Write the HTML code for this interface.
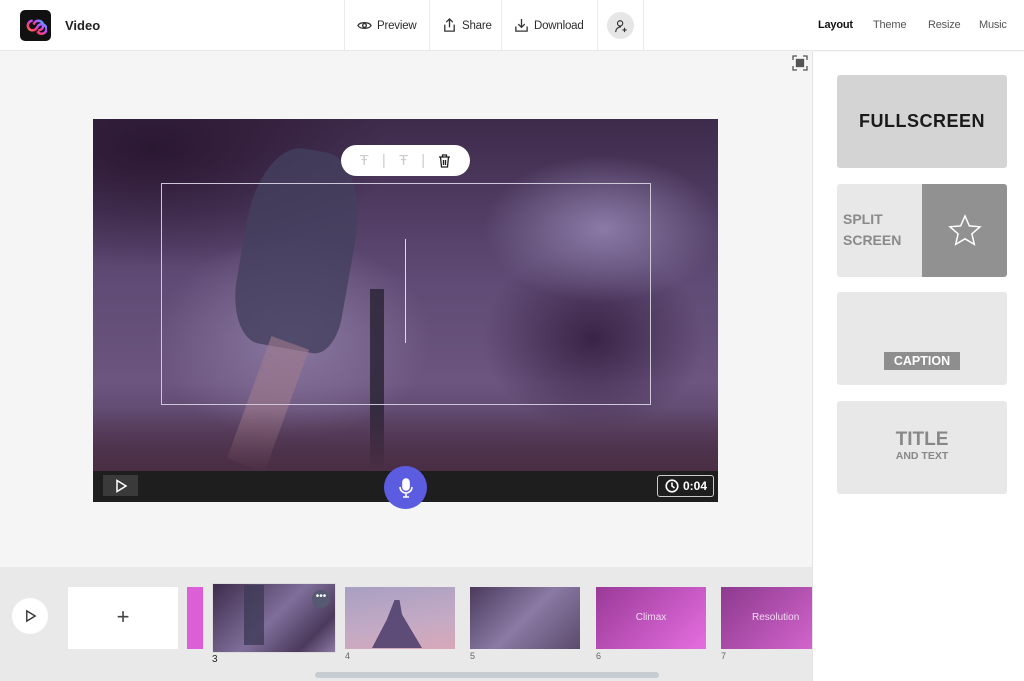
<!DOCTYPE html>
<html><head><style>
*{margin:0;padding:0;box-sizing:border-box}
body{width:1024px;height:681px;overflow:hidden;font-family:"Liberation Sans",sans-serif;background:#f5f5f5;position:relative}
.a{position:absolute}
.hdr{left:0;top:0;width:1024px;height:51px;background:#fff;border-bottom:1px solid #e6e6e6}
.nb{top:0;height:51px;border-left:1px solid #eaeaea;display:flex;align-items:center;font-size:11.5px;letter-spacing:-0.2px;color:#2c2c2c;gap:5px;padding-left:12px;white-space:nowrap}
.tab{top:19px;font-size:11px;color:#555;letter-spacing:-0.2px}
.card{left:837px;width:170px;height:93px;background:#e8e8e8;border-radius:3px}
.th{height:62px;top:587px}
.lbl{top:651px;font-size:9px;color:#666}
</style></head><body>
<div class="a hdr"></div>
<div class="a" style="left:20px;top:10px;width:31px;height:31px;background:#111;border-radius:5px"></div>
<svg class="a" style="left:24px;top:14px" width="23" height="23" viewBox="0 0 24 24"><defs><linearGradient id="g" x1="0" x2="1" y1="1" y2="0"><stop offset="0" stop-color="#f5c33b"/><stop offset=".3" stop-color="#ff3b6b"/><stop offset=".6" stop-color="#c24bff"/><stop offset="1" stop-color="#2fb8ff"/></linearGradient></defs><path d="M9 7a5 5 0 1 0 4 8l2-3a5 5 0 1 1 -1 6" fill="none" stroke="url(#g)" stroke-width="2.6"/><path d="M15 17a5 5 0 1 0-4-8l-1 2" fill="none" stroke="url(#g)" stroke-width="2.6"/></svg>
<div class="a" style="left:65px;top:18px;font-size:13px;font-weight:bold;color:#222">Video</div>
<div class="a nb" style="left:344px;width:85px"><svg width="15" height="15" viewBox="0 0 16 16" fill="none" stroke="#333" stroke-width="1.4"><path d="M1 8c2-4 12-4 14 0c-2 4-12 4-14 0z"/><circle cx="8" cy="8" r="2"/></svg>Preview</div>
<div class="a nb" style="left:429px;width:72px"><svg width="15" height="15" viewBox="0 0 16 16" fill="none" stroke="#333" stroke-width="1.4"><path d="M8 10V1M4.5 4.5L8 1l3.5 3.5M3 7v7h10V7"/></svg>Share</div>
<div class="a nb" style="left:501px;width:96px"><svg width="15" height="15" viewBox="0 0 16 16" fill="none" stroke="#333" stroke-width="1.4"><path d="M8 1v9M4.5 6.5L8 10l3.5-3.5M2 9v5h12V9"/></svg>Download</div>
<div class="a nb" style="left:597px;width:47px;border-right:1px solid #eaeaea;padding-left:0;justify-content:center"><div style="width:27px;height:27px;border-radius:50%;background:#e6e6e6;display:flex;align-items:center;justify-content:center"><svg width="14" height="14" viewBox="0 0 16 16" fill="none" stroke="#333" stroke-width="1.3"><circle cx="7" cy="5" r="3"/><path d="M2 15c0-4 3-6 6-6M12 10v5M9.5 12.5h5"/></svg></div></div>
<div class="a tab" style="left:818px;color:#111;font-weight:bold">Layout</div>
<div class="a tab" style="left:873px">Theme</div>
<div class="a tab" style="left:928px">Resize</div>
<div class="a tab" style="left:979px">Music</div>
<!-- right panel -->
<div class="a" style="left:812px;top:52px;width:212px;height:629px;background:#fff;border-left:1px solid #e3e3e3"></div>
<div class="a card" style="top:75px;background:#d4d4d4;display:flex;align-items:center;justify-content:center;font-size:18px;font-weight:bold;letter-spacing:0.5px;color:#1a1a1a">FULLSCREEN</div>
<div class="a card" style="top:184px;overflow:hidden"><div class="a" style="left:6px;top:25px;font-size:14px;font-weight:bold;color:#8a8a8a;line-height:21px">SPLIT<br>SCREEN</div><div class="a" style="left:85px;top:0;width:85px;height:93px;background:#919191;display:flex;align-items:center;justify-content:center"><svg width="36" height="36" viewBox="0 0 24 24" fill="none" stroke="#fff" stroke-width="1"><path d="M12 2l2.9 6.6 7.1.6-5.4 4.7 1.6 7-6.2-3.7-6.2 3.7 1.6-7L2 9.2l7.1-.6z"/></svg></div></div>
<div class="a card" style="top:292px"><div class="a" style="left:47px;top:60px;width:76px;height:18px;background:#8e8e8e;color:#fff;font-size:12.5px;font-weight:bold;text-align:center;line-height:18px">CAPTION</div></div>
<div class="a card" style="top:401px;text-align:center;color:#888;font-weight:bold"><div style="font-size:19px;margin-top:28px;line-height:21px">TITLE</div><div style="font-size:10.5px">AND TEXT</div></div>
<svg class="a" style="left:792px;top:55px" width="16" height="16" viewBox="0 0 16 16" fill="none" stroke="#555" stroke-width="1.3"><path d="M1 5V1h4M11 1h4v4M15 11v4h-4M5 15H1v-4"/><rect x="4.5" y="4.5" width="7" height="7" fill="#555"/></svg>
<!-- video -->
<div class="a" style="left:93px;top:119px;width:625px;height:352px;overflow:hidden;background:linear-gradient(180deg,#3e2a4a 0%,#5e4a74 45%,#6c5680 75%,#4e3552 100%)">
<div class="a" style="left:0;top:0;width:300px;height:150px;background:radial-gradient(ellipse at 20% 20%,#2a1732,transparent 70%)"></div>
<div class="a" style="left:380px;top:120px;width:240px;height:200px;background:radial-gradient(ellipse,#3a2446,transparent 65%)"></div>
<div class="a" style="left:50px;top:110px;width:300px;height:220px;background:radial-gradient(ellipse,#8a78a0,transparent 65%)"></div>
<div class="a" style="left:380px;top:30px;width:260px;height:160px;background:radial-gradient(ellipse,#8a7aa6,transparent 65%)"></div>
<div class="a" style="left:150px;top:30px;width:110px;height:200px;background:#43405e;border-radius:40% 40% 20% 30%;opacity:.8;transform:rotate(10deg)"></div>
<div class="a" style="left:155px;top:220px;width:40px;height:130px;background:#a07b8e;opacity:.6;transform:rotate(20deg)"></div>
<div class="a" style="left:277px;top:170px;width:14px;height:180px;background:#2e2638;opacity:.85"></div>
<div class="a" style="left:0;top:290px;width:625px;height:62px;background:linear-gradient(180deg,transparent,#4a2e44)"></div>
</div>
<div class="a" style="left:161px;top:183px;width:490px;height:222px;border:1px solid #cfc8d8"></div>
<div class="a" style="left:405px;top:239px;width:1px;height:104px;background:#ddd"></div>
<div class="a" style="left:341px;top:145px;width:129px;height:31px;background:#fff;border-radius:16px;font-size:15px;color:#ccc;display:flex;align-items:center;justify-content:space-around;padding:0 12px"><span>Ŧ</span><span>|</span><span>Ŧ</span><span>|</span><svg width="13" height="14" viewBox="0 0 13 14" fill="none" stroke="#222" stroke-width="1.3"><path d="M1 3h11M4.5 3V1h4v2M2.5 3l1 10h6l1-10M5.5 6v5M7.5 6v5"/></svg></div>
<div class="a" style="left:93px;top:471px;width:625px;height:31px;background:#1e1e1e"></div>
<div class="a" style="left:103px;top:475px;width:35px;height:21px;background:#3a3a3a;display:flex;align-items:center;justify-content:center"><svg width="14" height="14" viewBox="0 0 14 14" fill="none" stroke="#fff" stroke-width="1.5"><path d="M3 1.5v11l9-5.5z"/></svg></div>
<div class="a" style="left:657px;top:475px;width:57px;height:22px;border:1.5px solid #ccc;border-radius:3px;color:#fff;font-size:12px;font-weight:bold;display:flex;align-items:center;gap:4px;padding-left:7px"><svg width="14" height="14" viewBox="0 0 14 14" fill="none" stroke="#fff" stroke-width="1.6"><circle cx="7" cy="7" r="5.8"/><path d="M7 3.5V7l2.5 2"/></svg>0:04</div>
<div class="a" style="left:384px;top:466px;width:43px;height:43px;border-radius:50%;background:#5c5ce0;display:flex;align-items:center;justify-content:center"><svg width="14" height="20" viewBox="0 0 14 20" fill="none" stroke="#fff" stroke-width="1.6"><rect x="4" y="1" width="6" height="11" rx="3" fill="#fff"/><path d="M1 9a6 6 0 0 0 12 0M7 15v4M4 19h6"/></svg></div>
<!-- bottom strip -->
<div class="a" style="left:0;top:567px;width:812px;height:114px;background:#e9e9e9"></div>
<div class="a" style="left:12px;top:598px;width:36px;height:36px;border-radius:50%;background:#fff;display:flex;align-items:center;justify-content:center"><svg width="13" height="14" viewBox="0 0 14 14" fill="none" stroke="#333" stroke-width="1.5"><path d="M3 1.5v11l9-5.5z"/></svg></div>
<div class="a th" style="left:68px;width:110px;background:#fff;font-size:22px;color:#444;text-align:center;line-height:60px;font-weight:300">+</div>
<div class="a th" style="left:187px;width:16px;background:#dc5fd8"></div>
<div class="a" style="left:212px;top:583px;width:124px;height:70px;border:1px solid #ddd;background:linear-gradient(135deg,#3e2c4c,#7f6e9a 50%,#4b3a5c 80%,#8c7aa4)"></div>
<div class="a" style="left:244px;top:585px;width:20px;height:60px;background:#3e3b58;opacity:.8"></div>
<div class="a" style="left:312px;top:590px;width:18px;height:18px;border-radius:50%;background:#555a70;color:#fff;font-size:10px;text-align:center;line-height:14px">•••</div>
<div class="a lbl" style="left:212px;top:654px;color:#222;font-size:10px">3</div>
<div class="a th" style="left:345px;width:110px;background:linear-gradient(170deg,#a89fc2,#c4aac4 60%,#d8a8b8)"></div>
<div class="a" style="left:372px;top:600px;width:50px;height:48px;background:#4a3c6a;clip-path:polygon(45% 0,55% 0,60% 30%,100% 100%,0 100%,30% 40%);opacity:.85"></div>
<div class="a lbl" style="left:345px">4</div>
<div class="a th" style="left:470px;width:110px;background:linear-gradient(135deg,#4b3a5c,#8a7aa4 50%,#5c4a6c)"></div>
<div class="a lbl" style="left:470px">5</div>
<div class="a th" style="left:596px;width:110px;background:linear-gradient(135deg,#9a3a98,#e56ee0);color:#f3d8f2;font-size:10px;text-align:center;line-height:62px">Climax</div>
<div class="a lbl" style="left:596px">6</div>
<div class="a th" style="left:721px;width:91px;background:linear-gradient(135deg,#8c3a8e,#d264cc);color:#f3d8f2;font-size:10px;padding-left:31px;line-height:62px">Resolution</div>
<div class="a lbl" style="left:721px">7</div>
<div class="a" style="left:315px;top:672px;width:344px;height:6px;border-radius:3px;background:#c6ccd1"></div>
</body></html>
